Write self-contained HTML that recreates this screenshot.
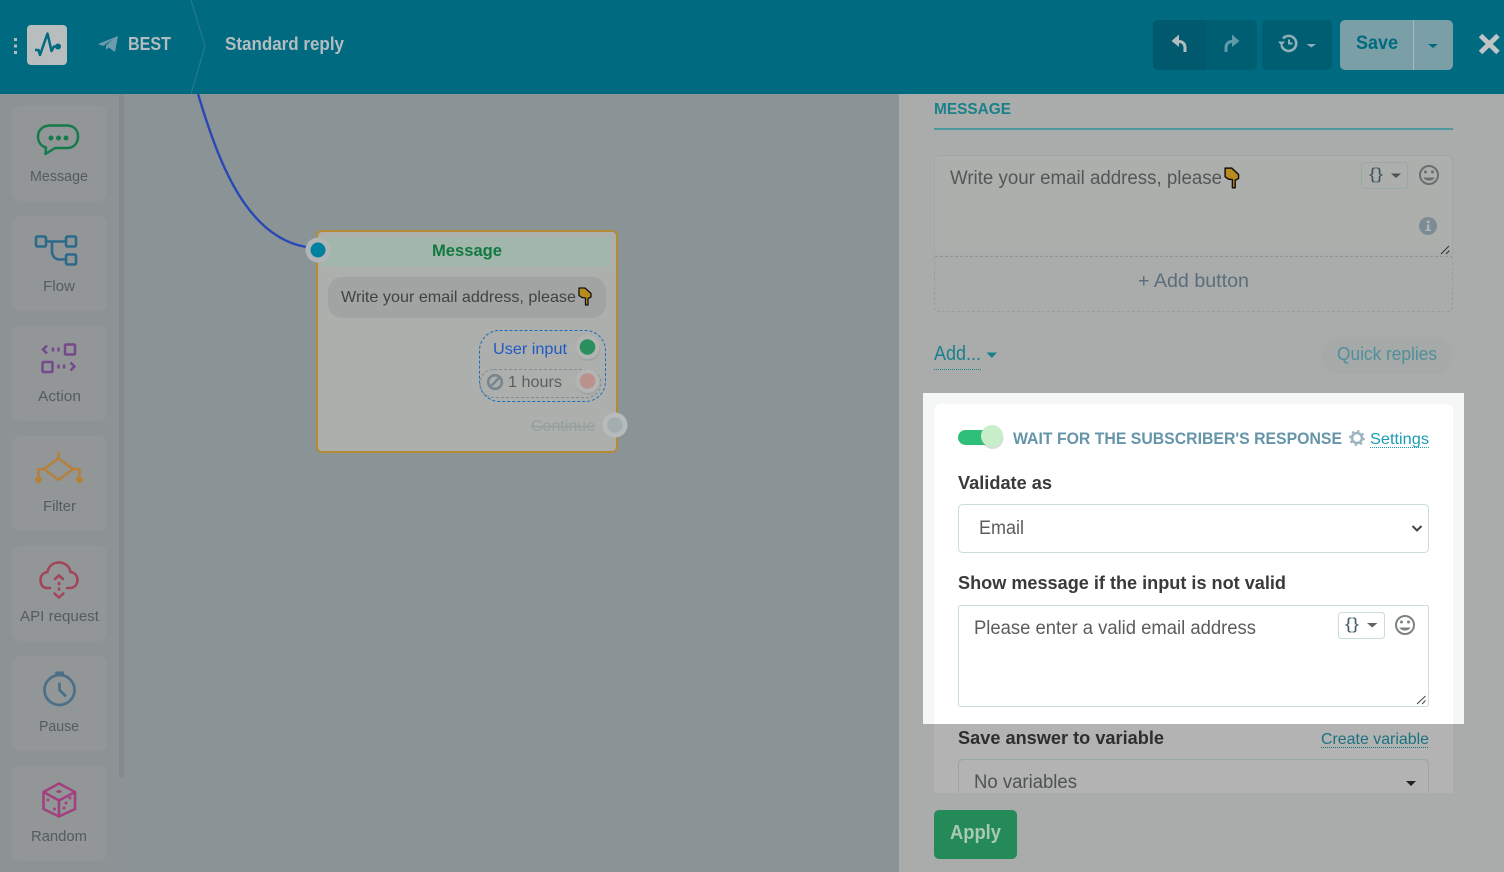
<!DOCTYPE html>
<html><head><meta charset="utf-8"><title>Standard reply</title>
<style>
html,body{margin:0;padding:0;background:#8a9496;overflow:hidden}
svg{display:block}
text{font-family:"Liberation Sans",sans-serif}
.lbl{font-size:15px;fill:#545c60}
</style></head>
<body>
<svg width="1504" height="872" viewBox="0 0 1504 872" xmlns="http://www.w3.org/2000/svg">
<defs>
<g id="hand"><path d="M1 1H7L13 6.500V10L10 11.500V18H7.500V11L4 10.500 1 8.500Z" fill="#b98a1e" stroke="#111" stroke-width="1.300" stroke-linejoin="round"/></g>
</defs>

<!-- canvas -->
<rect width="1504" height="872" fill="#8a9496"/>
<rect x="0" y="94" width="119" height="778" fill="#8d9395"/>
<rect x="119" y="94" width="5" height="684" fill="#858b8c"/>
<rect x="119" y="778" width="5" height="94" fill="#8d9395"/>

<!-- sidebar cards -->
<g fill="#929697">
<rect x="12" y="106" width="95" height="95" rx="8"/>
<rect x="12" y="216" width="95" height="95" rx="8"/>
<rect x="12" y="326" width="95" height="95" rx="8"/>
<rect x="12" y="436" width="95" height="95" rx="8"/>
<rect x="12" y="546" width="95" height="95" rx="8"/>
<rect x="12" y="656" width="95" height="95" rx="8"/>
<rect x="12" y="766" width="95" height="95" rx="8"/>
</g>
<text class="lbl" x="30" y="181" textLength="58" lengthAdjust="spacingAndGlyphs">Message</text>
<text class="lbl" x="43" y="291" textLength="32" lengthAdjust="spacingAndGlyphs">Flow</text>
<text class="lbl" x="38" y="401" textLength="43" lengthAdjust="spacingAndGlyphs">Action</text>
<text class="lbl" x="43" y="511" textLength="33" lengthAdjust="spacingAndGlyphs">Filter</text>
<text class="lbl" x="20" y="621" textLength="79" lengthAdjust="spacingAndGlyphs">API request</text>
<text class="lbl" x="39" y="731" textLength="40" lengthAdjust="spacingAndGlyphs">Pause</text>
<text class="lbl" x="31" y="841" textLength="56" lengthAdjust="spacingAndGlyphs">Random</text>

<!-- message icon -->
<path d="M50 125.500H67C74 125.500 78 130 78 136.500C78 143 74 148 67 148H55L45.500 154L46 147.500C41 146 38 142 38 136.500C38 130 43 125.500 50 125.500Z" fill="none" stroke="#157a4c" stroke-width="2.500" stroke-linejoin="round"/>
<circle cx="51" cy="138" r="2.500" fill="#157a4c"/><circle cx="58.500" cy="138" r="2.500" fill="#157a4c"/><circle cx="66" cy="138" r="2.500" fill="#157a4c"/>
<!-- flow icon -->
<g fill="none" stroke="#2b6a8a" stroke-width="2.600" stroke-linejoin="round">
<rect x="36" y="236.500" width="10" height="10" rx="1.500"/><rect x="66" y="236.500" width="10" height="10" rx="1.500"/><rect x="66" y="254.500" width="10" height="10" rx="1.500"/>
<path d="M46 241.500H66M52 241.500V251C52 256 55 259.500 60 259.500H66"/>
</g>
<!-- action icon -->
<g fill="none" stroke="#75498c" stroke-width="2.500">
<rect x="65" y="344.500" width="10" height="10" rx="1"/><rect x="42.500" y="362" width="10" height="10" rx="1"/>
<path d="M47 345.500L43 349.500L47 353.500M70.500 362.500L74.500 366.500L70.500 370.500"/>
<path d="M53 347.500V351.500M58.500 347.500V351.500M58.500 364.500V368.500M64 364.500V368.500"/>
</g>
<!-- filter icon -->
<g fill="none" stroke="#b5803a" stroke-width="2.400" stroke-linejoin="round">
<path d="M58.500 451.500V458.500L73 469L58.500 480L44 469L58.500 458.500"/>
<path d="M44 469H38.500V478M73 469H79.500V478"/>
</g>
<path d="M35 478.500C35 476.500 42 476.500 42 478.500C42 481 40 483.500 38.500 483.500C37 483.500 35 481 35 478.500ZM76 478.500C76 476.500 83 476.500 83 478.500C83 481 81 483.500 79.500 483.500C78 483.500 76 481 76 478.500Z" fill="#b5803a"/>
<!-- api icon -->
<g fill="none" stroke="#a34459" stroke-width="2.500" stroke-linecap="round">
<path d="M50 588H47C42.500 588 40.500 584 40.500 580C40.500 575.500 43.500 572.500 47.500 572C48.500 566 53 562.500 59 562.500C65 562.500 69.500 566.500 70.500 572C75 572.500 77.500 576 77.500 580C77.500 584.500 74.500 588 70 588H67"/>
<path d="M55 579L59 575.500L63 579M54.500 593.500L59 597.500L63.500 593.500"/>
<path d="M59 583V584M59 588.500V589.500" stroke-width="2.600"/>
</g>
<!-- pause icon -->
<g fill="none" stroke="#4a7088" stroke-width="2.700">
<circle cx="59.500" cy="690" r="15"/>
<path d="M59.500 682.500V690L66 696.500"/>
</g>
<rect x="55" y="671.500" width="9" height="2.800" rx="1" fill="#4a7088"/>
<!-- random icon -->
<g fill="none" stroke="#a1417f" stroke-width="2.600" stroke-linejoin="round">
<path d="M59 783.500L75 792V809L59 816.500L43.500 809V792ZM43.500 792L59 800.500L75 792M59 800.500V816.500"/>
</g>
<g fill="#a1417f">
<ellipse cx="59" cy="791.500" rx="2.800" ry="1.500"/>
<circle cx="48" cy="800" r="1.500"/><circle cx="54.500" cy="809" r="1.500"/>
<circle cx="70" cy="798" r="1.500"/><circle cx="66" cy="803" r="1.500"/><circle cx="64" cy="808" r="1.500"/>
</g>

<!-- connector -->
<path d="M198 94C218 160 245 236 306 247" fill="none" stroke="#2a48b5" stroke-width="2.400"/>

<!-- node -->
<rect x="317" y="231" width="300" height="221" rx="5" fill="#adafad" stroke="#b38d35" stroke-width="2"/>
<rect x="323" y="237" width="288" height="30" fill="#a2b6ab"/>
<text x="432" y="256" font-size="17" font-weight="bold" fill="#11793f" textLength="70" lengthAdjust="spacingAndGlyphs">Message</text>
<rect x="328" y="277" width="278" height="41" rx="14" fill="#a2a4a3"/>
<text x="341" y="302" font-size="16" fill="#3e4344" textLength="235" lengthAdjust="spacingAndGlyphs">Write your email address, please</text>
<use href="#hand" x="578" y="287"/>
<circle cx="318" cy="250" r="12.500" fill="#b1b5b5"/>
<circle cx="318" cy="250" r="7.500" fill="#00819f"/>
<rect x="479.500" y="330.500" width="126" height="71" rx="20" fill="none" stroke="#1a6ec0" stroke-width="1" stroke-dasharray="3 2"/>
<rect x="480" y="369.500" width="121" height="28" rx="14" fill="none" stroke="#7f8c92" stroke-width="1" stroke-dasharray="3 2"/>
<text x="493" y="354" font-size="16" fill="#2159c4" textLength="74" lengthAdjust="spacingAndGlyphs">User input</text>
<circle cx="588" cy="349" r="12" fill="#9a9c9b" opacity=".6"/>
<circle cx="587.500" cy="347" r="12" fill="#b3b5b3"/>
<circle cx="587.500" cy="347" r="7.800" fill="#2a9060"/>
<circle cx="495" cy="382" r="6.800" fill="none" stroke="#76868f" stroke-width="2.600"/>
<path d="M490.500 386.500L499.500 377.500" stroke="#76868f" stroke-width="2.400"/>
<text x="508" y="387" font-size="16" fill="#5c5f60" textLength="54" lengthAdjust="spacingAndGlyphs">1 hours</text>
<circle cx="588" cy="383" r="12" fill="#9a9c9b" opacity=".6"/>
<circle cx="587.500" cy="381" r="12" fill="#b3b5b3"/>
<circle cx="587.500" cy="381" r="7.800" fill="#bb918d"/>
<text x="531" y="431" font-size="16" fill="#94a0a0" text-decoration="line-through" textLength="64" lengthAdjust="spacingAndGlyphs">Continue</text>
<circle cx="615" cy="425" r="12.500" fill="#b7bbbb"/>
<circle cx="615" cy="425" r="7.800" fill="#a4aeb0"/>

<!-- right panel -->
<rect x="899" y="94" width="605" height="778" fill="#a9acaa"/>
<text x="934" y="114" font-size="16" font-weight="bold" fill="#1a808a" textLength="77" lengthAdjust="spacingAndGlyphs">MESSAGE</text>
<rect x="934" y="128" width="519" height="2" fill="#4f9a9f"/>

<rect x="934.500" y="155.500" width="518" height="101" rx="5" fill="#adafad" stroke="#9ba9a8"/>
<rect x="934" y="252" width="520" height="60" fill="#a9acaa"/>
<path d="M934.500 252V256M1452.500 252V256" stroke="#9ba9a8"/>
<path d="M935 256.500H1452" stroke="#919695" stroke-dasharray="3 2"/>
<path d="M934.500 257V306.500Q934.500 311.500 939.500 311.500H1447.500Q1452.500 311.500 1452.500 306.500V257" fill="none" stroke="#959f9e" stroke-dasharray="3 2"/>
<text x="950" y="184" font-size="19" fill="#545656" textLength="272" lengthAdjust="spacingAndGlyphs">Write your email address, please</text>
<use href="#hand" transform="translate(1224 167) scale(1.120 1.150)"/>
<rect x="1361.500" y="162.500" width="46" height="26" rx="3" fill="#adafad" stroke="#98a8a7"/>
<text x="1369" y="179" font-size="16" fill="#3f5560" textLength="14" lengthAdjust="spacingAndGlyphs">{}</text>
<path d="M1391 173.500H1401L1396 178Z" fill="#4a5356"/>
<circle cx="1429" cy="175" r="9" fill="none" stroke="#696f6f" stroke-width="2"/>
<circle cx="1425.500" cy="172" r="1.500" fill="#696f6f"/><circle cx="1432.500" cy="172" r="1.500" fill="#696f6f"/>
<path d="M1423.500 177.500C1425 181.500 1433 181.500 1434.500 177.500Z" fill="#696f6f"/>
<circle cx="1428" cy="226" r="9" fill="#7d8b95"/>
<rect x="1427" y="224.500" width="2.400" height="5.500" fill="#b0b4b4"/><rect x="1425.500" y="229.500" width="5.500" height="1.500" fill="#b0b4b4"/><rect x="1426.800" y="220.500" width="2.800" height="2.600" fill="#b0b4b4"/>
<path d="M1441 254L1449 246M1446 254L1449.500 250.500" stroke="#333" stroke-width="1"/>
<text x="1138" y="287" font-size="19" fill="#5a6f7b" textLength="111" lengthAdjust="spacingAndGlyphs">+ Add button</text>

<text x="934" y="360" font-size="20" fill="#1a7f8e" textLength="47" lengthAdjust="spacingAndGlyphs">Add...</text>
<path d="M934 369.500H981" stroke="#1a7f8e" stroke-dasharray="1 1"/>
<path d="M986.500 352.500H997L991.800 358Z" fill="#1a7f8e"/>
<rect x="1321" y="337" width="132" height="37" rx="18.500" fill="#a5a9a8"/>
<text x="1337" y="360" font-size="18" fill="#4f8f9c" textLength="100" lengthAdjust="spacingAndGlyphs">Quick replies</text>

<!-- lower (dim) card -->
<rect x="934" y="724" width="519" height="69" fill="#b2b3b2"/>
<text x="958" y="744" font-size="18" font-weight="bold" fill="#2d2f2f" textLength="206" lengthAdjust="spacingAndGlyphs">Save answer to variable</text>
<text x="1321" y="744" font-size="16" fill="#19737f" textLength="108" lengthAdjust="spacingAndGlyphs">Create variable</text>
<path d="M1321 747.500H1429" stroke="#19737f" stroke-dasharray="1 1"/>
<path d="M958.500 793V764.500Q958.500 759.500 963.500 759.500H1423.500Q1428.500 759.500 1428.500 764.500V793" fill="none" stroke="#98a6a5"/>
<text x="974" y="788" font-size="19" fill="#4e5354" textLength="103" lengthAdjust="spacingAndGlyphs">No variables</text>
<path d="M1406 781H1416L1411 786Z" fill="#222"/>
<rect x="934" y="810" width="83" height="49" rx="5" fill="#238a58"/>
<text x="950" y="839" font-size="20" font-weight="bold" fill="#a9c9b4" textLength="51" lengthAdjust="spacingAndGlyphs">Apply</text>

<!-- highlighted section -->
<rect x="923" y="393" width="541" height="331" fill="#f4f7f6"/>
<path d="M934 724V412Q934 404 942 404H1445Q1453 404 1453 412V724Z" fill="#fff"/>
<rect x="958" y="430" width="36" height="15" rx="7.500" fill="#2fbf78"/>
<circle cx="992.500" cy="438" r="11" fill="#8b9a92" opacity=".35"/>
<circle cx="992" cy="436" r="11" fill="#c8edc9"/>
<text x="1013" y="444" font-size="16.500" font-weight="bold" fill="#6694a8" textLength="329" lengthAdjust="spacingAndGlyphs">WAIT FOR THE SUBSCRIBER'S RESPONSE</text>
<circle cx="1357" cy="438" r="5" fill="none" stroke="#9db5c0" stroke-width="2.600"/>
<circle cx="1357" cy="438" r="7" fill="none" stroke="#9db5c0" stroke-width="2" stroke-dasharray="2.200 3.300"/>
<text x="1370" y="444" font-size="16" fill="#1a9cb5" textLength="59" lengthAdjust="spacingAndGlyphs">Settings</text>
<path d="M1370 447.500H1429" stroke="#1a9cb5" stroke-dasharray="1 1"/>
<text x="958" y="489" font-size="18" font-weight="bold" fill="#3a3a3a" textLength="94" lengthAdjust="spacingAndGlyphs">Validate as</text>
<rect x="958.500" y="504.500" width="470" height="48" rx="4" fill="#fff" stroke="#c9dddd"/>
<text x="979" y="534" font-size="19" fill="#5c5c5c" textLength="45" lengthAdjust="spacingAndGlyphs">Email</text>
<path d="M1412.500 526L1417 530.500L1421.500 526" fill="none" stroke="#444" stroke-width="2"/>
<text x="958" y="589" font-size="18" font-weight="bold" fill="#3a3a3a" textLength="328" lengthAdjust="spacingAndGlyphs">Show message if the input is not valid</text>
<rect x="958.500" y="605.500" width="470" height="101" rx="2" fill="#fff" stroke="#c9dddd"/>
<text x="974" y="634" font-size="19" fill="#5c5c5c" textLength="282" lengthAdjust="spacingAndGlyphs">Please enter a valid email address</text>
<rect x="1338.500" y="612.500" width="46" height="26" rx="3" fill="#fff" stroke="#c9dddd"/>
<text x="1345" y="629" font-size="16" fill="#46606c" textLength="14" lengthAdjust="spacingAndGlyphs">{}</text>
<path d="M1367 623H1377.500L1372.200 627.500Z" fill="#5c6669"/>
<circle cx="1405" cy="625" r="9" fill="none" stroke="#7d8383" stroke-width="2"/>
<circle cx="1401.500" cy="622" r="1.500" fill="#7d8383"/><circle cx="1408.500" cy="622" r="1.500" fill="#7d8383"/>
<path d="M1399.500 627.500C1401 631.500 1409 631.500 1410.500 627.500Z" fill="#7d8383"/>
<path d="M1417 704L1425.500 696M1422 704L1425.500 700.500" stroke="#444" stroke-width="1"/>

<!-- header -->
<rect width="1504" height="94" fill="#006a80"/>
<path d="M191 0L205 46L191 94" fill="none" stroke="#2b7d90"/>
<rect x="14" y="38" width="3" height="3" fill="#b3bdbf"/><rect x="14" y="44.500" width="3" height="3" fill="#b3bdbf"/><rect x="14" y="51" width="3" height="3" fill="#b3bdbf"/>
<rect x="27" y="25" width="40" height="40" rx="4" fill="#b8bdbe"/>
<path d="M35 50H38.500L40 55L47.500 33.500L51.500 51L54 46.500H57" fill="none" stroke="#006a80" stroke-width="2.500" stroke-linejoin="round"/>
<circle cx="58" cy="46.500" r="3" fill="#006a80"/>
<path d="M98 44L118 36L115 52L108.500 47.500L106 50V45.500L113 39L103 46Z" fill="#6c9cab"/>
<text x="128" y="50" font-size="18" font-weight="bold" fill="#b3bdbf" textLength="43" lengthAdjust="spacingAndGlyphs">BEST</text>
<text x="225" y="50" font-size="18" font-weight="bold" fill="#b3bdbf" textLength="119" lengthAdjust="spacingAndGlyphs">Standard reply</text>

<rect x="1153" y="20" width="104" height="50" rx="5" fill="#005e72"/>
<path d="M1158 20H1206V70H1158Q1153 70 1153 65V25Q1153 20 1158 20Z" fill="#00596c"/>
<rect x="1262" y="20" width="70" height="50" rx="5" fill="#005e72"/>
<path d="M1185 52V47.500C1185 44 1182.500 41.500 1179 41.500H1175" fill="none" stroke="#b3bdbf" stroke-width="3"/>
<path d="M1179 34.500L1171.500 41L1179 47Z" fill="#b3bdbf"/>
<path d="M1226 52V47.500C1226 44 1228.500 41.500 1232 41.500H1236" fill="none" stroke="#5f9ba8" stroke-width="3"/>
<path d="M1232 34.500L1239.500 41L1232 47Z" fill="#5f9ba8"/>
<path d="M1283 38.500A7.500 7.500 0 1 1 1281.500 45.500" fill="none" stroke="#8fb0b8" stroke-width="2.600"/>
<path d="M1278 41.500H1285L1281.500 46Z" fill="#8fb0b8"/>
<path d="M1289 39.500V43.500H1292.500" fill="none" stroke="#8fb0b8" stroke-width="2"/>
<path d="M1306.500 44H1316L1311.300 47.500Z" fill="#8fb0b8"/>
<rect x="1340" y="20" width="113" height="50" rx="5" fill="#7b9fa6"/>
<rect x="1413" y="20" width="1" height="50" fill="#a3bcc1"/>
<text x="1356" y="49" font-size="19" font-weight="bold" fill="#006a80" textLength="42" lengthAdjust="spacingAndGlyphs">Save</text>
<path d="M1428 44H1438L1433 48Z" fill="#006a80"/>
<path d="M1480.500 35.500L1498 52.500M1498 35.500L1480.500 52.500" stroke="#c0c4c4" stroke-width="5"/>
</svg>
</body></html>
